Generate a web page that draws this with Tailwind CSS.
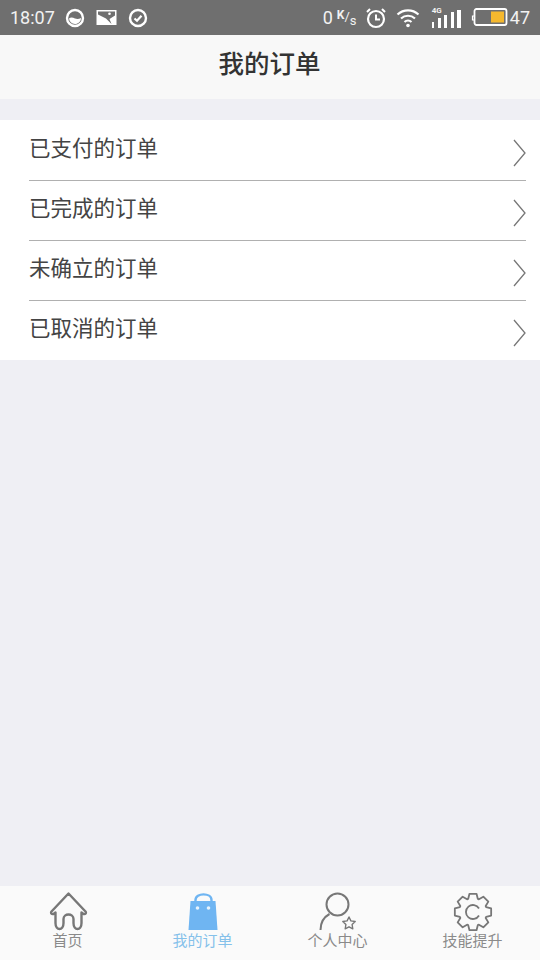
<!DOCTYPE html>
<html lang="zh">
<head>
  <meta charset="UTF-8">
  <meta name="viewport" content="width=device-width, initial-scale=1.0">
  <title>我的订单</title>
  <script src="https://cdn.jsdelivr.net/npm/@tailwindcss/browser@4"></script>
</head>
<body class="w-[540px] h-[960px] overflow-hidden flex flex-col bg-[#efeff4] font-['Roboto','Noto_Sans_CJK_SC',sans-serif]">

  <!-- status bar -->
  <div class="h-[35px] shrink-0 bg-[#6f6f6f] flex items-center text-[#f2f2f2] pl-[10px] pr-[10px]">
    <span class="text-[18px] leading-none w-[45px]">18:07</span>
    <svg class="ml-[10px]" width="20" height="20" viewBox="0 0 20 20"><circle cx="10" cy="10" r="8" fill="none" stroke="#fff" stroke-width="2.4"/><path d="M4 10.500c2-1.800 4-.8 6 0s4 .6 6-.6c0 3.500-2.700 6-6 6s-5.600-2.300-6-5.400z" fill="#fff"/></svg>
    <svg class="ml-[11px]" width="21" height="18" viewBox="0 0 21 18"><rect x="0.500" y="1" width="20" height="15" fill="#fff"/><path d="M2 2.500H19V6.500l-5.500 3.500 2 5-5.500-5.500L2 5.500z" fill="#6f6f6f"/><circle cx="13.500" cy="4.700" r="1.300" fill="#fff"/></svg>
    <svg class="ml-[11px]" width="20" height="20" viewBox="0 0 20 20"><circle cx="10" cy="10" r="8" fill="none" stroke="#fff" stroke-width="2.400"/><path d="M6.500 10.500l2.500 2.300 4.500-5" fill="none" stroke="#fff" stroke-width="2.200"/></svg>

    <span class="ml-auto text-[18px] leading-none">0</span>
    <span class="ml-[4px] text-[13px] leading-none flex items-start h-[18px] w-[23px]"><span class="font-bold text-[12px]">K</span><span class="text-[13px] mt-[1px]">/</span><span class="text-[13px] mt-[5px]">s</span></span>
    <svg class="ml-[5px]" width="22" height="22" viewBox="0 0 22 22"><circle cx="11" cy="12" r="8" fill="none" stroke="#fff" stroke-width="2.200"/><path d="M11 7.500V12.500H15" fill="none" stroke="#fff" stroke-width="2"/><path d="M2 5l3-3M20 5l-3-3" stroke="#fff" stroke-width="2"/></svg>
    <svg class="ml-[9px]" width="24" height="20" viewBox="0 0 24 20"><path d="M1.500 6.500c6-5.500 15-5.500 21 0M5 10.500c4-3.700 10-3.700 14 0M8.500 14c2-1.800 5-1.800 7 0" fill="none" stroke="#fff" stroke-width="2.200"/><circle cx="12" cy="17.500" r="1.800" fill="#fff"/></svg>
    <span class="ml-[12px] relative w-[29px] h-[20px] flex items-end gap-[3.500px]">
      <span class="absolute left-0 top-[-1px] text-[8px] leading-none font-bold">4G</span>
      <span class="w-[2.500px] h-[6px] bg-white"></span><span class="w-[3px] h-[10px] bg-white"></span><span class="w-[3px] h-[13px] bg-white"></span><span class="w-[3px] h-[16px] bg-white"></span><span class="w-[3.500px] h-[18px] bg-white"></span>
    </span>
    <svg class="ml-[10px]" width="37" height="19" viewBox="0 0 37 19"><path d="M3 8h-1.500v4H3" fill="none" stroke="#fff" stroke-width="1.200"/><rect x="3.500" y="1" width="32" height="16" rx="2" fill="none" stroke="#fff" stroke-width="1.800"/><rect x="20" y="3.500" width="13" height="11" fill="#f5b82e"/></svg>
    <span class="ml-[2px] text-[18px] leading-none">47</span>
  </div>

  <!-- title -->
  <div class="h-[64px] shrink-0 bg-[#f8f8f8] flex items-center justify-center">
    <h1 class="text-[25.500px] leading-none font-medium text-[#333] -mt-[4px] -ml-[1px]">我的订单</h1>
  </div>

  <!-- order list -->
  <ul class="mt-[21px] bg-white shrink-0">
    <li class="h-[60px] ml-[29px] mr-[14px] flex justify-between">
      <span class="text-[21.500px] leading-none text-[#444] mt-[18px]">已支付的订单</span>
      <svg class="mt-[19px]" width="13" height="28" viewBox="0 0 13 28"><path d="M1 1l11 13L1 27" fill="none" stroke="#777" stroke-width="1.300"/></svg>
    </li>
    <li class="h-[60px] ml-[29px] mr-[14px] flex justify-between border-t border-[#b0b0b0]">
      <span class="text-[21.500px] leading-none text-[#444] mt-[17px]">已完成的订单</span>
      <svg class="mt-[18px]" width="13" height="28" viewBox="0 0 13 28"><path d="M1 1l11 13L1 27" fill="none" stroke="#777" stroke-width="1.300"/></svg>
    </li>
    <li class="h-[60px] ml-[29px] mr-[14px] flex justify-between border-t border-[#b0b0b0]">
      <span class="text-[21.500px] leading-none text-[#444] mt-[17px]">未确立的订单</span>
      <svg class="mt-[18px]" width="13" height="28" viewBox="0 0 13 28"><path d="M1 1l11 13L1 27" fill="none" stroke="#777" stroke-width="1.300"/></svg>
    </li>
    <li class="h-[60px] ml-[29px] mr-[14px] flex justify-between border-t border-[#b0b0b0]">
      <span class="text-[21.500px] leading-none text-[#444] mt-[17px]">已取消的订单</span>
      <svg class="mt-[18px]" width="13" height="28" viewBox="0 0 13 28"><path d="M1 1l11 13L1 27" fill="none" stroke="#777" stroke-width="1.300"/></svg>
    </li>
  </ul>

  <!-- tab bar -->
  <nav class="mt-auto h-[74px] shrink-0 bg-[#fafafa] grid grid-cols-4 text-[15px] leading-none text-[#8a8a8a]">
    <a class="flex flex-col items-center pt-[6px]">
      <svg width="40" height="40" viewBox="0 0 40 40"><path d="M20.500 1.500L3.500 19.500c-1 1.500 0 3 2 2.500L7.500 20.500V31c0 8 8 8 8 0V27c0-6 10-6 10 0v4c0 8 8 8 8 0V20.500l2 1.500c2 .5 3-1 2-2.500z" fill="none" stroke="#777" stroke-width="2.400" stroke-linejoin="round"/></svg>
      <span class="mt-[2px]">首页</span>
    </a>
    <a class="flex flex-col items-center pt-[6px] text-[#85c1ea]">
      <svg width="32" height="40" viewBox="0 0 32 40"><path d="M8.500 12V8c0-7.500 16-7.500 16 0v4" fill="none" stroke="#6fb5f2" stroke-width="2.400"/><path d="M3.500 9h25l2 29H1.500z" fill="#6fb5f2"/><circle cx="10.500" cy="16" r="1.800" fill="#e8f3fc"/><circle cx="21.500" cy="16" r="1.800" fill="#e8f3fc"/></svg>
      <span class="mt-[2px]">我的订单</span>
    </a>
    <a class="flex flex-col items-center pt-[6px]">
      <svg width="40" height="40" viewBox="0 0 40 40"><circle cx="19.500" cy="12.500" r="11" fill="none" stroke="#777" stroke-width="2"/><path d="M2.500 38c0-7 3.500-13 9-16" fill="none" stroke="#777" stroke-width="2"/><path d="M31 25l1.900 3.900 4.300.6-3.100 3 .7 4.300-3.800-2-3.800 2 .7-4.300-3.100-3 4.300-.6z" fill="none" stroke="#777" stroke-width="1.400" stroke-linejoin="round"/></svg>
      <span class="mt-[2px]">个人中心</span>
    </a>
    <a class="flex flex-col items-center pt-[6px]">
      <svg width="40" height="40" viewBox="0 0 40 40"><g transform="translate(20 20)" fill="none" stroke="#777" stroke-width="1.800" stroke-linejoin="round"><path d="M13.160-4.790L18.160-3.530 18.160 3.530 13.160 4.790 12.690 5.920 15.340 10.340 10.340 15.340 5.920 12.690 4.790 13.160 3.530 18.160-3.530 18.160-4.790 13.160-5.920 12.690-10.340 15.340-15.340 10.340-12.690 5.920-13.160 4.790-18.160 3.530-18.160-3.530-13.160-4.790-12.690-5.920-15.340-10.340-10.340-15.340-5.920-12.690-4.790-13.160-3.530-18.160 3.530-18.160 4.790-13.160 5.920-12.690 10.340-15.340 15.340-10.340 12.690-5.920z"/><path d="M6-3.500A7 7 0 1 0 6 3.500"/></g></svg>
      <span class="mt-[2px]">技能提升</span>
    </a>
  </nav>
</body>
</html>
